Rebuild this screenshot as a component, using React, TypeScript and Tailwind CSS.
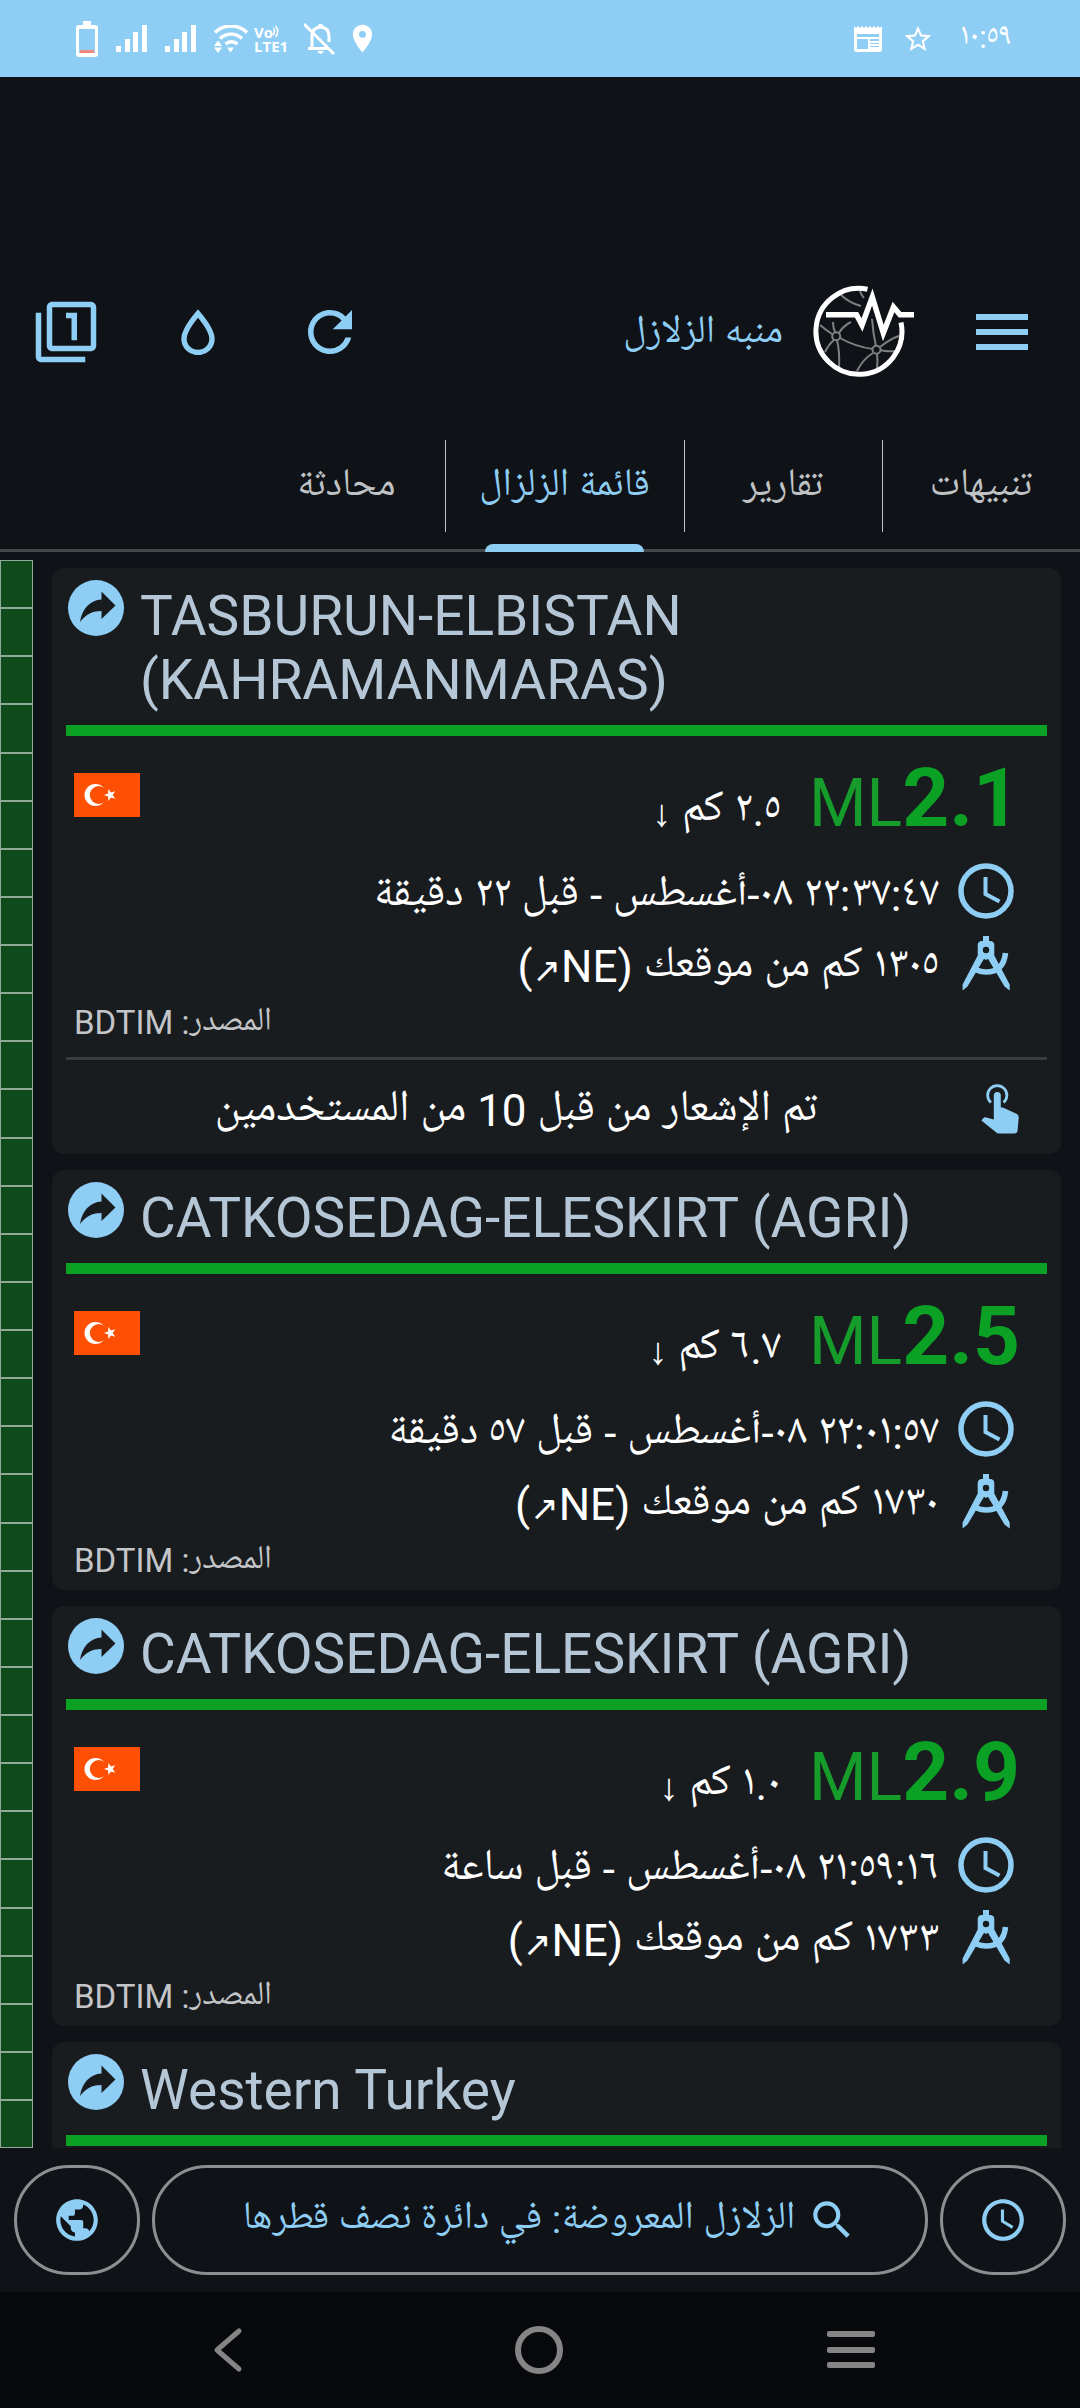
import { useState } from 'react'
import type { ReactNode } from 'react'
import {
  MdAccessTime,
  MdLocationOn,
  MdOutlineFilter1,
  MdPublic,
  MdRefresh,
  MdSearch,
  MdStarBorder,
} from 'react-icons/md'

type QuakeDetails = {
  magnitude: string
  depth: string
  time: string
  distance: string
  reports?: string
}

type Quake = {
  id: number
  place: string
  details?: QuakeDetails
}

const quakes: Quake[] = [
  {
    id: 1,
    place: 'TASBURUN-ELBISTAN (KAHRAMANMARAS)',
    details: {
      magnitude: '2.1',
      depth: '٢.٥ كم',
      time: '٢٢:٣٧:٤٧ ٠٨-أغسطس - قبل ٢٢ دقيقة',
      distance: '١٣٠٥ كم من موقعك',
      reports: 'تم الإشعار من قبل 10 من المستخدمين',
    },
  },
  {
    id: 2,
    place: 'CATKOSEDAG-ELESKIRT (AGRI)',
    details: {
      magnitude: '2.5',
      depth: '٦.٧ كم',
      time: '٢٢:٠١:٥٧ ٠٨-أغسطس - قبل ٥٧ دقيقة',
      distance: '١٧٣٠ كم من موقعك',
    },
  },
  {
    id: 3,
    place: 'CATKOSEDAG-ELESKIRT (AGRI)',
    details: {
      magnitude: '2.9',
      depth: '١.٠ كم',
      time: '٢١:٥٩:١٦ ٠٨-أغسطس - قبل ساعة',
      distance: '١٧٣٣ كم من موقعك',
    },
  },
  { id: 4, place: 'Western Turkey' },
]

const tabs = ['تنبيهات', 'تقارير', 'قائمة الزلزال', 'محادثة']

function SignalIcon() {
  return (
    <svg viewBox="0 0 31 28" className="h-7 w-[31px]" fill="currentColor">
      <rect x="0" y="21" width="5" height="6" />
      <rect x="9" y="14" width="5" height="13" />
      <rect x="17" y="7" width="5" height="20" />
      <rect x="26" y="0" width="5" height="27" />
    </svg>
  )
}

function StatusBar() {
  return (
    <div dir="ltr" className="flex h-[77px] shrink-0 items-center bg-[#8fcef4] pr-17 pl-19 text-white">
      <div className="flex items-center gap-[18px]">
        <svg viewBox="0 0 22 36" className="h-9 w-[22px]">
          <path d="M7 0h8v4h4a3 3 0 0 1 3 3v26a3 3 0 0 1-3 3H3a3 3 0 0 1-3-3V7a3 3 0 0 1 3-3h4z" fill="#fff" />
          <rect x="3" y="8" width="16" height="24" fill="#8fcef4" />
          <rect x="4" y="29" width="14" height="3" fill="#ee8a7b" />
        </svg>
        <SignalIcon />
        <SignalIcon />
        <svg viewBox="0 0 34 28" className="h-7 w-[34px]" fill="none" stroke="currentColor" strokeWidth="3.4">
          <path d="M1 7.5a23 23 0 0 1 32 0" />
          <path d="M6 13.5a16 16 0 0 1 22 0" />
          <path d="M11.500 19a9 9 0 0 1 12 0" />
          <path d="M0 21l4-5.500 4 5.500zM0 22.500l4 5.500 4-5.500zM13 22.500h7l-3.500 5z" fill="currentColor" stroke="none" />
        </svg>
        <div className="-ml-3 flex w-[36px] flex-col font-['Open_Sans','Noto_Sans',sans-serif] text-[15px] leading-[14px] font-bold">
          <span className="flex items-center">
            Vo
            <svg viewBox="0 0 8 13" className="h-[13px] w-2" fill="none" stroke="currentColor" strokeWidth="1.600">
              <path d="M0 3q3 3.500 0 7M2.500 1q4.500 5.500 0 11" />
            </svg>
          </span>
          <span>LTE1</span>
        </div>
        <svg viewBox="0 0 32 32" className="-ml-1 h-8 w-8" fill="none" stroke="currentColor" strokeWidth="3">
          <path d="M8 25V13.500q0-9 8.500-9.500 8.500.5 8.500 9.500V19M4 25.500h21" />
          <path d="M0 1l30 30" />
          <path d="M13.500 4a3 3 0 0 1 6 0zM13 28h7q-3.500 6-7 0z" fill="currentColor" stroke="none" />
        </svg>
        <MdLocationOn className="-ml-2 h-[33px] w-[33px]" />
      </div>
      <div className="ml-auto flex items-center gap-5">
        <svg viewBox="0 0 28 26" className="h-[26px] w-7">
          <path d="M0 0l2 2 2-2 2 2 2-2 2 2 2-2 2 2 2-2 2 2 2-2 2 2 2-2 2 2 2-2v23a3 3 0 0 1-3 3H3a3 3 0 0 1-3-3z" fill="#fff" />
          <path d="M3 8h22v3H3zM3 13h11v10H3zM16 13h9v2h-9zM16 17h9v1h-9zM16 20h9v1h-9z" fill="#8fcef4" />
        </svg>
        <MdStarBorder className="h-8 w-8" />
        <span className="ml-1.5 text-[31px]">١٠:٥٩</span>
      </div>
    </div>
  )
}

function Logo() {
  return (
    <svg viewBox="0 0 104 96" className="h-24 w-[104px]" fill="none">
      <g stroke="#7d7f81" strokeWidth="2">
        <path d="M22 38q0 6 2 10M40 38q-8 4-12 11M9 41q6 5 12 9M14 68q4-8 9-12M28 84q1-16-2-28M29 54q16 9 33 11M61 35q1 14 4 27M88 52q-9 3-19 11M69 66q7 2 16 1M66 70q1 7 0 14M46 87q6-12 16-18" />
        <path d="M29 10q9 9 21 12M49 7q1 4 4 7" />
        <circle cx="25.200" cy="52.300" r="4" />
        <circle cx="65.500" cy="65.700" r="4" />
      </g>
      <g stroke="#fff">
        <path d="M56.500 5.200A43 43 0 1 0 90 38.500" strokeWidth="5" />
        <path d="M15 30.700H45.500L51 41 61.300 13 72.300 49 82.500 23 89 30.700H103" strokeWidth="5.500" />
      </g>
    </svg>
  )
}

function Header() {
  return (
    <header className="flex h-[305px] shrink-0 items-end justify-between pr-[39px] text-[#8fcef4]">
      <div className="flex h-[100px] items-center">
        <button aria-label="القائمة" className="flex h-24 w-[78px] items-center">
          <svg viewBox="0 0 52 36" className="h-9 w-[78px]" fill="currentColor">
            <path d="M0 0h52v6H0zM0 15h52v6H0zM0 30h52v6H0z" />
          </svg>
        </button>
        <span className="mr-12">
          <Logo />
        </span>
        <h1 className="mr-7 pt-1 text-[39px] leading-[50px]">منبه الزلازل</h1>
      </div>
      <div className="flex h-[100px] items-center">
        <button aria-label="تحديث" className="flex w-[132px] justify-center">
          <MdRefresh className="h-[66px] w-[66px]" />
        </button>
        <button aria-label="اللون" className="flex w-[132px] justify-center">
          <svg viewBox="0 0 34 46" className="h-[46px] w-[34px]" fill="none" stroke="currentColor" strokeWidth="5.400">
            <path d="M17 4.500Q3 21 3 30a14 13.500 0 0 0 28 0Q31 21 17 4.500z" />
          </svg>
        </button>
        <button aria-label="عرض" className="flex w-[132px] justify-center">
          <MdOutlineFilter1 className="h-[66px] w-[66px]" />
        </button>
      </div>
    </header>
  )
}

function Tabs() {
  const [active, setActive] = useState(2)

  return (
    <nav className="mt-[42px] flex h-32 shrink-0 border-b-[3px] border-[#434749]">
      {tabs.map((tab, i) => (
        <button
          key={tab}
          onClick={() => setActive(i)}
          className={`relative flex h-32 min-w-[198px] justify-center px-[34px] pt-4 text-[39px] ${
            i === active ? 'text-[#8fcef4]' : 'text-[#c0c3c6]'
          }`}
        >
          <span className="leading-[94px]">{tab}</span>
          {i < tabs.length - 1 && <span className="absolute top-4 left-0 h-[92px] w-px bg-[#c0c3c6]" />}
          {i === active && <span className="absolute inset-x-10 bottom-0 h-2 rounded-t-lg bg-[#8fcef4]" />}
        </button>
      ))}
    </nav>
  )
}

function ShareIcon() {
  return (
    <svg viewBox="0 0 56 56" className="h-14 w-14">
      <circle cx="28" cy="28" r="28" fill="#8fcef4" />
      <path d="M12 42C14 29 22 20 33.500 19.500V11.500L47.500 25.500 33.500 39V31C25 31 18 34 12 42z" fill="#191c1f" />
    </svg>
  )
}

function CompassIcon() {
  return (
    <svg viewBox="0 0 56 56" className="h-14 w-14" fill="#8fcef4">
      <path d="M25 1h6v6h-6z" />
      <path
        d="M24 6h8a4 4 0 0 1 4.300 4v10L28 25l-8.300-5V10A4 4 0 0 1 24 6zM28 11.800a3.200 3.200 0 1 0 0 6.400 3.200 3.200 0 0 0 0-6.400z"
        fillRule="evenodd"
      />
      <path d="M20.500 19l6 4L9.500 51.500 4.600 55.500V49.500zM35.500 19l-6 4 17 28.500 5.200 4V49.500z" />
      <path d="M47.500 18q-2 19-19.500 19-5 0-9.500-2" fill="none" stroke="#8fcef4" strokeWidth="5.600" />
    </svg>
  )
}

function ClockIcon() {
  return (
    <svg viewBox="0 0 56 56" className="h-14 w-14" fill="none" stroke="#8fcef4">
      <circle cx="28" cy="28" r="25" strokeWidth="5.500" />
      <path d="M27.500 14v17l14 7.500" strokeWidth="4" />
    </svg>
  )
}

function TouchIcon() {
  return (
    <svg viewBox="0 0 38 50" className="h-[50px] w-[38px]">
      <path d="M10 18.500A9.600 9.600 0 1 1 22.500 18.500" fill="none" stroke="#8fcef4" strokeWidth="2.800" />
      <path
        d="M12.800 11.500a3.500 3.500 0 0 1 7 0V23.500h2L36 30q2 1.500 1.700 4L36.500 47q-.5 2.500-3 2.500H18q-2 0-3.300-1.500L.4 36.500 2.500 34q1.200-1 2.800-.5l7.500 2z"
        fill="#8fcef4"
      />
    </svg>
  )
}

function TurkishFlag() {
  return (
    <svg viewBox="0 0 66 44" className="h-11 w-[66px]" role="img" aria-label="تركيا">
      <rect width="66" height="44" fill="#fd5005" />
      <circle cx="21.500" cy="22" r="11" fill="#fff" />
      <circle cx="24.800" cy="22" r="9" fill="#fd5005" />
      <path d="M30 22l4.200-1.400.1-4.500 2.700 3.500 4.200-1.300-2.500 3.700 2.500 3.700-4.200-1.300-2.700 3.500-.1-4.500z" fill="#fff" />
    </svg>
  )
}

function InfoRow({ icon, children }: { icon: ReactNode; children: ReactNode }) {
  return (
    <div className="flex h-[72px] items-center gap-[19px] pr-[33px]">
      {icon}
      <span className="pt-[10px] text-[44px] leading-16">{children}</span>
    </div>
  )
}

function QuakeBody({ details }: { details: QuakeDetails }) {
  return (
    <>
      <div className="flex items-start justify-between pt-5">
        <div className="flex h-[99px] items-baseline gap-7 pr-[27px]">
          <div dir="ltr" className="min-w-[210px] text-[66px] leading-24 text-[#159c2b]">
            ML<strong className="text-[82px] leading-none font-bold text-[#0aa125]">{details.magnitude}</strong>
          </div>
          <span className="text-[44px] leading-none text-white">
            {details.depth} <span className="font-['Liberation_Sans',sans-serif] text-[38px]">↓</span>
          </span>
        </div>
        <span className="pt-[17px] pl-2">
          <TurkishFlag />
        </span>
      </div>

      <div className="text-white">
        <InfoRow icon={<ClockIcon />}>{details.time}</InfoRow>
        <InfoRow icon={<CompassIcon />}>
          {details.distance} (NE<span className="text-[34px]">↗</span>)
        </InfoRow>
      </div>
      <p className="pb-[5px] pl-2 text-left text-[33px] leading-[48px] text-[#c3c5c8]">المصدر: BDTIM</p>

      {details.reports && (
        <div className="mt-[5px] flex h-[97px] items-center gap-[27px] border-t-[3px] border-[#383c3f] pt-1 pr-7 pl-3">
          <TouchIcon />
          <span className="flex-1 pt-1 text-center text-[44px] leading-16 text-white">{details.reports}</span>
        </div>
      )}
    </>
  )
}

function QuakeCard({ quake }: { quake: Quake }) {
  return (
    <article className="min-h-32 shrink-0 rounded-xl bg-[#191c1f] px-3.5 pt-3">
      <div dir="ltr" className="flex gap-4 pl-0.5">
        <button aria-label="مشاركة" className="h-14 shrink-0">
          <ShareIcon />
        </button>
        <h2 className="max-w-[800px] pt-1 pb-[13px] text-[55px] leading-16 text-[#b5c7d6]">{quake.place}</h2>
      </div>
      <div className="h-[11px] bg-[#0aa125]" />
      {quake.details && <QuakeBody details={quake.details} />}
    </article>
  )
}

function IntensityScale() {
  return (
    <div className="flex w-[33px] shrink-0 flex-col">
      {Array.from({ length: 33 }, (_, i) => (
        <div key={i} className="flex-1 border border-[#93a896] bg-[#0f4a1b]" />
      ))}
    </div>
  )
}

function BottomBar() {
  const pill = 'flex h-[110px] items-center justify-center rounded-full border-[3px] border-[#8b8f92]'

  return (
    <div className="flex shrink-0 gap-3 px-3.5 py-[17px] text-[#8fcef4]">
      <button aria-label="الوقت" className={`${pill} w-[126px]`}>
        <MdAccessTime className="h-[50px] w-[50px]" />
      </button>
      <button className={`${pill} flex-1 gap-3 pl-5`}>
        <MdSearch className="h-[50px] w-[50px]" />
        <span className="text-[39px]">الزلازل المعروضة: في دائرة نصف قطرها</span>
      </button>
      <button aria-label="الخريطة" className={`${pill} w-[126px]`}>
        <MdPublic className="h-[50px] w-[50px]" />
      </button>
    </div>
  )
}

function SystemNav() {
  return (
    <div dir="ltr" className="flex h-[116px] shrink-0 items-center justify-between bg-[#07090c] px-[205px] text-[#858585]">
      <button aria-label="رجوع">
        <svg viewBox="0 0 46 46" className="h-[46px] w-[46px]" fill="none" stroke="currentColor" strokeWidth="5" strokeLinecap="round" strokeLinejoin="round">
          <path d="M34 4L12 23l22 19" />
        </svg>
      </button>
      <button aria-label="الرئيسية" className="h-12 w-12 rounded-full border-[6px] border-current" />
      <button aria-label="التطبيقات الأخيرة">
        <svg viewBox="0 0 48 38" className="h-[38px] w-12" fill="currentColor">
          <rect width="48" height="6" rx="2" />
          <rect y="16" width="48" height="6" rx="2" />
          <rect y="31" width="48" height="6" rx="2" />
        </svg>
      </button>
    </div>
  )
}

export default function App() {
  return (
    <div
      dir="rtl"
      lang="ar"
      className="flex h-screen flex-col bg-[#0f1317] font-[Roboto,'Noto_Naskh_Arabic_UI','Noto_Naskh_Arabic','Noto_Sans_Arabic','Noto_Sans','DejaVu_Sans',sans-serif]"
    >
      <StatusBar />
      <Header />
      <Tabs />
      <main className="flex min-h-0 flex-1 pt-2">
        <div className="flex flex-1 flex-col gap-4 overflow-hidden px-[19px] pt-2">
          {quakes.map((quake) => (
            <QuakeCard key={quake.id} quake={quake} />
          ))}
        </div>
        <IntensityScale />
      </main>
      <BottomBar />
      <SystemNav />
    </div>
  )
}
